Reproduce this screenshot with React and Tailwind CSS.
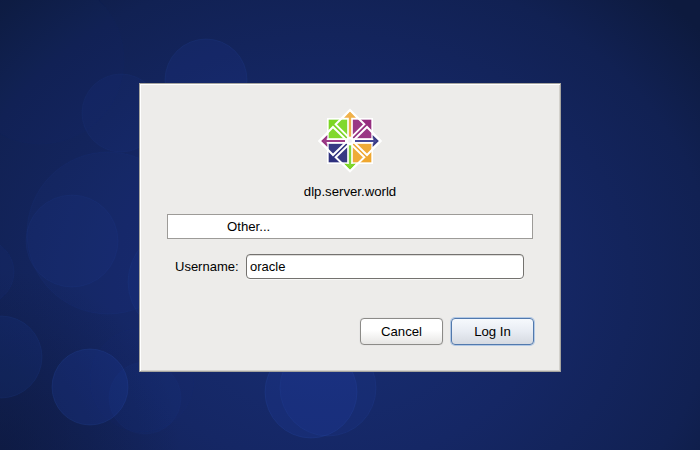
const bubbles = [
  { x: 206, y: 80, r: 41, o: 0.14 },
  { x: 121, y: 113, r: 39, o: 0.09 },
  { x: 40, y: 60, r: 84, o: 0.03 },
  { x: 108, y: 233, r: 81, o: 0.08 },
  { x: 72, y: 241, r: 46, o: 0.09 },
  { x: -19, y: 272, r: 33, o: 0.08 },
  { x: 1, y: 357, r: 41, o: 0.13 },
  { x: 90, y: 387, r: 38, o: 0.22 },
  { x: 145, y: 398, r: 36, o: 0.07 },
  { x: 142, y: 380, r: 52, o: 0.03 },
  { x: 182, y: 282, r: 54, o: 0.1 },
  { x: 311, y: 392, r: 46, o: 0.2 },
  { x: 328, y: 388, r: 48, o: 0.14 },
];

function Backdrop() {
  return (
    <svg className="absolute inset-0" width="700" height="450" viewBox="0 0 700 450" aria-hidden="true">
      <defs>
        <radialGradient id="glow" gradientUnits="userSpaceOnUse" cx="0" cy="0" r="1" gradientTransform="translate(330 285) scale(480 400)">
          <stop offset="0" stopColor="#182e74" />
          <stop offset="0.45" stopColor="#152765" />
          <stop offset="0.8" stopColor="#112153" />
          <stop offset="1" stopColor="#0d1a3e" />
        </radialGradient>
        <radialGradient id="corner" gradientUnits="userSpaceOnUse" cx="0" cy="450" r="180">
          <stop offset="0" stopColor="#0c1638" stopOpacity="0.55" />
          <stop offset="1" stopColor="#0c1638" stopOpacity="0" />
        </radialGradient>
      </defs>
      <rect width="700" height="450" fill="url(#glow)" />
      <rect width="700" height="450" fill="url(#corner)" />
      {bubbles.map((b) => (
        <circle key={`${b.x}-${b.y}`} cx={b.x} cy={b.y} r={b.r} fill="#2142a8" fillOpacity={b.o} stroke="#2d55b4" strokeOpacity={b.o * 0.9} />
      ))}
    </svg>
  );
}

function Logo() {
  return (
    <svg className="h-20 w-20" viewBox="0 0 240 240" aria-hidden="true">
      <path d="M51 54H189V192H51Z" fill="#fff" />
      <path d="M120 28L145 54H95ZM120 216L95 191H145ZM26 123L52 98V148ZM214 123L188 148V98Z" fill="#fff" stroke="#fff" strokeWidth="3" />
      <path d="M120 34L138 53H102Z" fill="#f0ad41" />
      <path d="M207 123L188 141V105Z" fill="#30327f" />
      <path d="M120 210L102 191H138Z" fill="#78d31c" />
      <path d="M33 123L52 105V141Z" fill="#932a7c" />
      <path d="M56 59H112V115H56Z" fill="#7bd623" />
      <path d="M128 59H184V115H128Z" fill="#952d7f" />
      <path d="M56 131H112V187H56Z" fill="#2e307e" />
      <path d="M128 131H184V187H128Z" fill="#efa72f" />
      <g fill="#fff" fillOpacity="0.05" stroke="#fff" strokeWidth="6">
        <path d="M120 30L163 73L120 116L77 73Z" />
        <path d="M120 214L163 172L120 130L77 172Z" />
        <path d="M28 123L69 81L112 123L69 165Z" />
        <path d="M212 123L171 81L128 123L171 165Z" />
      </g>
      <path d="M120 54V113M120 133V192M50 123H107M133 123H190" stroke="#fff" strokeWidth="15" />
      <path d="M120 48V110" stroke="#f0b04a" strokeWidth="7" />
      <path d="M120 136V198" stroke="#83d73b" strokeWidth="7" />
      <path d="M42 123H105" stroke="#9c3d88" strokeWidth="6" />
      <path d="M135 123H198" stroke="#464997" strokeWidth="6" />
      <circle cx="120" cy="123" r="12" fill="#fff" />
      <circle cx="120" cy="123" r="6" fill="#f1f0f2" />
    </svg>
  );
}

export default function App() {
  return (
    <main className="relative flex h-[450px] w-[700px] items-start justify-center overflow-hidden bg-[#132458] pt-[83px] font-['Liberation_Sans',Arial,sans-serif] text-[13px] leading-4 text-black">
      <Backdrop />
      <form
        className="relative flex h-[289px] w-[422px] flex-col border border-[#a5a49f] bg-[#edecea] px-[27px] shadow-[inset_1px_1px_0_#fff,inset_-1px_-1px_0_#d3d1cc]"
        onSubmit={(e) => e.preventDefault()}
      >
        <header className="flex flex-col items-center pt-4">
          <Logo />
          <h1 className="mt-1 text-[13.2px]">dlp.server.world</h1>
        </header>
        <div className="mt-[14px] flex h-[25px] items-center border border-[#9d9b98] bg-white pl-[59px] text-[13.2px]">
          Other...
        </div>
        <div className="mt-[15px] flex items-center pr-[9px] pl-2">
          <label className="w-[71px]" htmlFor="username">Username:</label>
          <input
            id="username"
            className="h-[25px] min-w-0 flex-1 rounded-[4px] border border-[#74726f] bg-white px-[3px] shadow-[inset_0_1px_0_#dddcda,0_1px_0_#f8f8f7] outline-none"
            defaultValue="oracle"
          />
        </div>
        <div className="mt-[39px] -mr-px flex justify-end gap-2">
          <button type="button" className="h-[27px] w-[83px] rounded-[4px] border border-[#8c8b88] bg-linear-to-b from-white from-45% to-[#e7e6e4] text-[13.2px] shadow-[0_0_1px_#bbb]">
            Cancel
          </button>
          <button type="submit" className="h-[27px] w-[83px] rounded-[4px] border border-[#5279ad] bg-linear-to-b from-[#f6f9fd] via-[#e8ecf3] to-[#d6dae1] text-[13.2px] shadow-[0_0_0_1px_#b3c9e5]">
            Log In
          </button>
        </div>
      </form>
    </main>
  );
}
